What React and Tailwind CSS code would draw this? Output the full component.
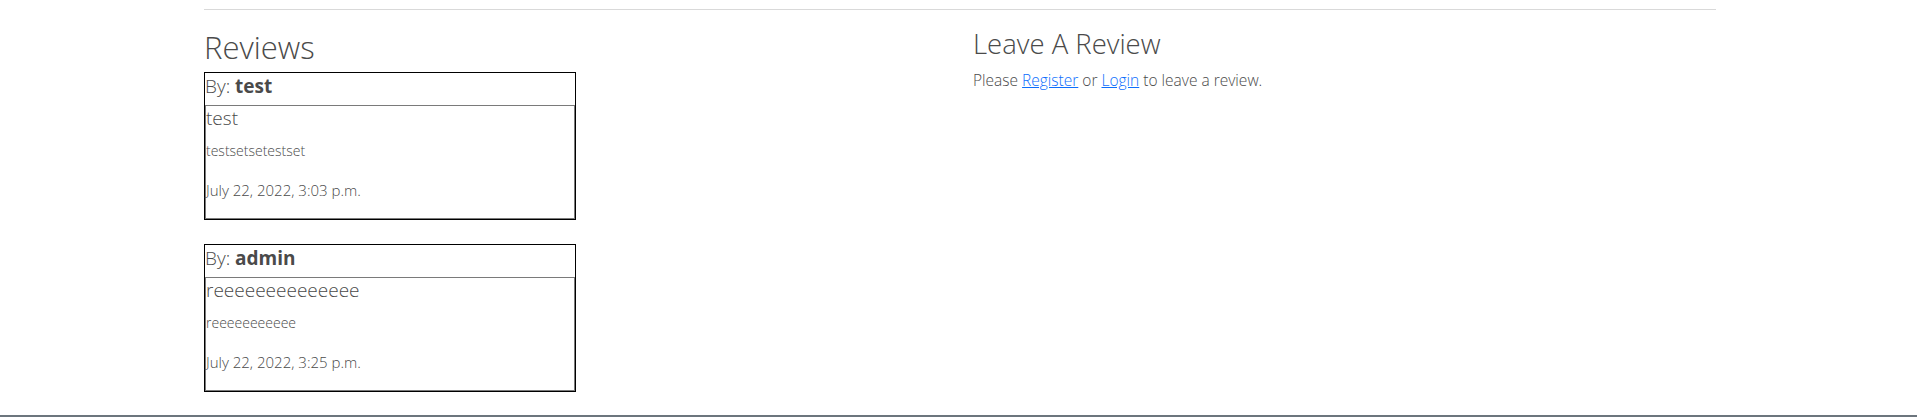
import React from 'react';

const REVIEWS = [
  { author: 'test', title: 'test', body: 'testsetsetestset', date: 'July 22, 2022, 3:03 p.m.' },
  { author: 'admin', title: 'reeeeeeeeeeeeee', body: 'reeeeeeeeeee', date: 'July 22, 2022, 3:25 p.m.' },
];

function ReviewCard({ review }) {
  return (
    <div className="w-[372px] border border-black">
      <div className="h-[32px] text-[19px] leading-[26px] font-light">
        By: <strong className="font-bold">{review.author}</strong>
      </div>
      <div className="border border-[#7a7a7a]">
        <div className="text-[19px] leading-[24px] font-light">{review.title}</div>
        <p className="mt-[12px] text-[14px] leading-[18px] font-light">{review.body}</p>
        <p className="mt-[20px] pb-[18px] text-[15px] leading-[20px] font-light">{review.date}</p>
      </div>
    </div>
  );
}

export default function App() {
  return (
    <div className="relative h-[417px] bg-white text-[#4a4a4a] font-['Open_Sans',_'Liberation_Sans',_sans-serif]">
      <div className="ml-[204px] w-[1512px] pt-[9px]">
        <div className="h-px bg-[#d9d9d9]" />
        <div className="grid grid-cols-2">
          <div>
            <h2 className="mt-[19px] mb-[7px] text-[31px] leading-[36px] font-light">Reviews</h2>
            <div className="flex flex-col gap-[24px]">
              {REVIEWS.map(r => (
                <ReviewCard key={r.author} review={r} />
              ))}
            </div>
          </div>
          <div className="pl-[13px]">
            <h3 className="mt-[18px] text-[27.5px] leading-[32px] font-light">Leave A Review</h3>
            <p className="mt-[9px] text-[15.5px] leading-[22px] font-light">
              Please <a href="#" className="text-[#0d6efd] underline">Register</a> or{' '}
              <a href="#" className="text-[#0d6efd] underline">Login</a> to leave a review.
            </p>
          </div>
        </div>
      </div>
      <div className="absolute left-0 right-0 bottom-0 h-[2px] bg-[#6c757d]" />
    </div>
  );
}
